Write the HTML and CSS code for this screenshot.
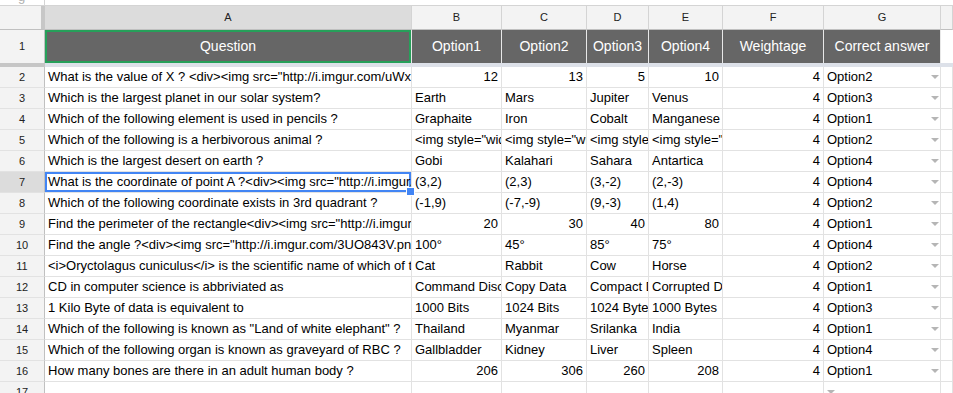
FILE: index.html
```html
<!DOCTYPE html>
<html lang="en">
<head>
  <meta charset="UTF-8">
  <meta name="viewport" content="width=device-width, initial-scale=1.0">
  <title>Quiz questions - Sheet1</title>
  <link rel="stylesheet" href="styles.css">
</head>
<body>
  <div class="formula-bar">
    <div class="fx-cell"></div>
    <div class="fx-input"><span>g</span></div>
  </div>

  <div class="sheet">
    <div class="row col-heads">
      <div class="corner"></div>
      <div class="head active">A</div>
      <div class="head">B</div>
      <div class="head">C</div>
      <div class="head">D</div>
      <div class="head">E</div>
      <div class="head">F</div>
      <div class="head">G</div>
      <div class="head"></div>
    </div>

    <div class="row title-row">
      <div class="num-head">1</div>
      <div class="title picked">Question</div>
      <div class="title">Option1</div>
      <div class="title">Option2</div>
      <div class="title">Option3</div>
      <div class="title">Option4</div>
      <div class="title">Weightage</div>
      <div class="title">Correct answer</div>
      <div class="blank"></div>
    </div>

    <div class="row freeze">
      <div class="freeze-head"></div>
      <div class="freeze-bar"></div>
    </div>

    <div class="row">
      <div class="num-head">2</div>
      <div class="cell">What is the value of X ? &lt;div&gt;&lt;img src="http://i.imgur.com/uWx3pQk.png"&gt;&lt;/div&gt;</div>
      <div class="cell num">12</div>
      <div class="cell num">13</div>
      <div class="cell num">5</div>
      <div class="cell num">10</div>
      <div class="cell num">4</div>
      <div class="cell drop">Option2</div>
      <div class="cell"></div>
    </div>
    <div class="row">
      <div class="num-head">3</div>
      <div class="cell">Which is the largest planet in our solar system?</div>
      <div class="cell">Earth</div>
      <div class="cell">Mars</div>
      <div class="cell">Jupiter</div>
      <div class="cell">Venus</div>
      <div class="cell num">4</div>
      <div class="cell drop">Option3</div>
      <div class="cell"></div>
    </div>
    <div class="row">
      <div class="num-head">4</div>
      <div class="cell">Which of the following element is used in pencils ?</div>
      <div class="cell">Graphaite</div>
      <div class="cell">Iron</div>
      <div class="cell">Cobalt</div>
      <div class="cell">Manganese</div>
      <div class="cell num">4</div>
      <div class="cell drop">Option1</div>
      <div class="cell"></div>
    </div>
    <div class="row">
      <div class="num-head">5</div>
      <div class="cell">Which of the following is a herbivorous animal ?</div>
      <div class="cell">&lt;img style="width:100px" src="http://i.imgur.com/a1.png"&gt;</div>
      <div class="cell">&lt;img style="width:100px" src="http://i.imgur.com/a2.png"&gt;</div>
      <div class="cell">&lt;img style="width:100px" src="http://i.imgur.com/a3.png"&gt;</div>
      <div class="cell">&lt;img style="width:100px" src="http://i.imgur.com/a4.png"&gt;</div>
      <div class="cell num">4</div>
      <div class="cell drop">Option2</div>
      <div class="cell"></div>
    </div>
    <div class="row">
      <div class="num-head">6</div>
      <div class="cell">Which is the largest desert on earth ?</div>
      <div class="cell">Gobi</div>
      <div class="cell">Kalahari</div>
      <div class="cell">Sahara</div>
      <div class="cell">Antartica</div>
      <div class="cell num">4</div>
      <div class="cell drop">Option4</div>
      <div class="cell"></div>
    </div>
    <div class="row">
      <div class="num-head active">7</div>
      <div class="cell sel"><span class="clip">What is the coordinate of point A ?&lt;div&gt;&lt;img src="http://i.imgur.com/p7Ax2.png"&gt;&lt;/div&gt;</span></div>
      <div class="cell">(3,2)</div>
      <div class="cell">(2,3)</div>
      <div class="cell">(3,-2)</div>
      <div class="cell">(2,-3)</div>
      <div class="cell num">4</div>
      <div class="cell drop">Option4</div>
      <div class="cell"></div>
    </div>
    <div class="row">
      <div class="num-head">8</div>
      <div class="cell">Which of the following coordinate exists in 3rd quadrant ?</div>
      <div class="cell">(-1,9)</div>
      <div class="cell">(-7,-9)</div>
      <div class="cell">(9,-3)</div>
      <div class="cell">(1,4)</div>
      <div class="cell num">4</div>
      <div class="cell drop">Option2</div>
      <div class="cell"></div>
    </div>
    <div class="row">
      <div class="num-head">9</div>
      <div class="cell">Find the perimeter of the rectangle&lt;div&gt;&lt;img src="http://i.imgur.com/r9Ct.png"&gt;&lt;/div&gt;</div>
      <div class="cell num">20</div>
      <div class="cell num">30</div>
      <div class="cell num">40</div>
      <div class="cell num">80</div>
      <div class="cell num">4</div>
      <div class="cell drop">Option1</div>
      <div class="cell"></div>
    </div>
    <div class="row">
      <div class="num-head">10</div>
      <div class="cell">Find the angle ?&lt;div&gt;&lt;img src="http://i.imgur.com/3UO843V.png"&gt;&lt;/div&gt;</div>
      <div class="cell">100°</div>
      <div class="cell">45°</div>
      <div class="cell">85°</div>
      <div class="cell">75°</div>
      <div class="cell num">4</div>
      <div class="cell drop">Option4</div>
      <div class="cell"></div>
    </div>
    <div class="row">
      <div class="num-head">11</div>
      <div class="cell">&lt;i&gt;Oryctolagus cuniculus&lt;/i&gt; is the scientific name of which of these ?</div>
      <div class="cell">Cat</div>
      <div class="cell">Rabbit</div>
      <div class="cell">Cow</div>
      <div class="cell">Horse</div>
      <div class="cell num">4</div>
      <div class="cell drop">Option2</div>
      <div class="cell"></div>
    </div>
    <div class="row">
      <div class="num-head">12</div>
      <div class="cell">CD in computer science is abbriviated as</div>
      <div class="cell">Command Disc</div>
      <div class="cell">Copy Data</div>
      <div class="cell">Compact Disc</div>
      <div class="cell">Corrupted Data</div>
      <div class="cell num">4</div>
      <div class="cell drop">Option1</div>
      <div class="cell"></div>
    </div>
    <div class="row">
      <div class="num-head">13</div>
      <div class="cell">1 Kilo Byte of data is equivalent to</div>
      <div class="cell">1000 Bits</div>
      <div class="cell">1024 Bits</div>
      <div class="cell">1024 Bytes</div>
      <div class="cell">1000 Bytes</div>
      <div class="cell num">4</div>
      <div class="cell drop">Option3</div>
      <div class="cell"></div>
    </div>
    <div class="row">
      <div class="num-head">14</div>
      <div class="cell">Which of the following is known as "Land of white elephant" ?</div>
      <div class="cell">Thailand</div>
      <div class="cell">Myanmar</div>
      <div class="cell">Srilanka</div>
      <div class="cell">India</div>
      <div class="cell num">4</div>
      <div class="cell drop">Option1</div>
      <div class="cell"></div>
    </div>
    <div class="row">
      <div class="num-head">15</div>
      <div class="cell">Which of the following organ is known as graveyard of RBC ?</div>
      <div class="cell">Gallbladder</div>
      <div class="cell">Kidney</div>
      <div class="cell">Liver</div>
      <div class="cell">Spleen</div>
      <div class="cell num">4</div>
      <div class="cell drop">Option4</div>
      <div class="cell"></div>
    </div>
    <div class="row">
      <div class="num-head">16</div>
      <div class="cell">How many bones are there in an adult human body ?</div>
      <div class="cell num">206</div>
      <div class="cell num">306</div>
      <div class="cell num">260</div>
      <div class="cell num">208</div>
      <div class="cell num">4</div>
      <div class="cell drop">Option1</div>
      <div class="cell"></div>
    </div>
    <div class="row">
      <div class="num-head">17</div>
      <div class="cell"></div>
      <div class="cell"></div>
      <div class="cell"></div>
      <div class="cell"></div>
      <div class="cell"></div>
      <div class="cell"></div>
      <div class="cell drop"></div>
      <div class="cell"></div>
    </div>
  </div>
</body>
</html>
```

FILE: styles.css
```css
* {
  margin: 0;
  padding: 0;
  box-sizing: border-box;
}

body {
  font-family: "Liberation Sans", Arial, sans-serif;
  background-color: #fff;
  color: #000;
  overflow: hidden;
}

/* strip of the formula bar still visible above the grid */
.formula-bar {
  display: grid;
  grid-template-columns: 45px 1fr;
  height: 6px;
  border-bottom: 1px solid #d4d4d4;
  overflow: hidden;
}

.fx-cell {
  border-right: 1px solid #d4d4d4;
}

.fx-input span {
  display: block;
  margin: -11px 0 0 -27px;
  font-size: 13px;
  line-height: 16px;
  color: #b0b0b0;
}

.row {
  display: grid;
  grid-template-columns: 45px 367px 90px 85px 62px 74px 101px 117px 1fr;
  height: 21px;
}

/* column letters */
.col-heads {
  height: 24px;
  background: #f3f3f3;
}

.corner {
  background: #f3f3f3;
  border-right: 4px solid #c7c7c7;
  border-bottom: 1px solid #c0c0c0;
}

.head {
  font-size: 11px;
  line-height: 23px;
  text-align: center;
  color: #222;
  border-right: 1px solid #d4d4d4;
  border-bottom: 1px solid #c0c0c0;
}

.head.active {
  background: #dcdcdc;
}

/* row numbers */
.num-head {
  background: #f3f3f3;
  font-size: 11px;
  line-height: 20px;
  text-align: center;
  color: #222;
  border-right: 1px solid #c0c0c0;
  border-bottom: 1px solid #e2e2e2;
}

.num-head.active {
  background: #dcdcdc;
}

/* dark title row */
.title-row {
  height: 33px;
}

.title-row .num-head {
  line-height: 33px;
  border-bottom: none;
}

.title {
  background: #666;
  color: #fff;
  font-size: 14px;
  line-height: 33px;
  text-align: center;
  white-space: nowrap;
  overflow: hidden;
  border-right: 1px solid #e8e8e8;
}

.title.picked {
  box-shadow: inset 0 0 0 2px #26a05a;
}

.blank {
  background: #fff;
}

/* frozen rows divider */
.freeze {
  height: 4px;
  grid-template-columns: 45px 1fr;
}

.freeze-head {
  background: #c6c6c6;
}

.freeze-bar {
  background: #dde1e9;
}

/* data cells */
.cell {
  padding: 0 3px;
  font-size: 13px;
  line-height: 20px;
  white-space: nowrap;
  overflow: hidden;
  border-right: 1px solid #e2e2e2;
  border-bottom: 1px solid #e2e2e2;
}

.cell.num {
  text-align: right;
}

.cell.drop {
  display: flex;
  justify-content: space-between;
  align-items: center;
  padding-right: 1px;
}

.cell.drop::after {
  content: "";
  flex: none;
  width: 0;
  height: 0;
  border-left: 4px solid transparent;
  border-right: 4px solid transparent;
  border-top: 4px solid #b5b5b5;
}

/* active cell with fill handle */
.cell.sel {
  position: relative;
  z-index: 2;
  overflow: visible;
  padding: 0;
}

.cell.sel .clip {
  display: block;
  height: 100%;
  padding: 0 3px;
  overflow: hidden;
  box-shadow: inset 0 0 0 2px #4285f4;
}

.cell.sel::after {
  content: "";
  position: absolute;
  right: -4px;
  bottom: -4px;
  width: 7px;
  height: 7px;
  background: #4285f4;
  border: 1px solid #fff;
}
```
